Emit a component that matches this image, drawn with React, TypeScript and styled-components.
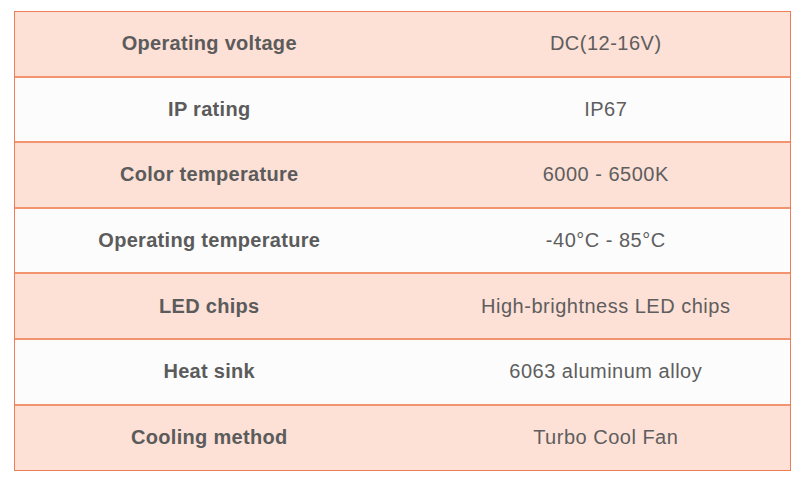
import styled, { createGlobalStyle } from 'styled-components'

const GlobalStyle = createGlobalStyle`
  * {
    margin: 0;
    padding: 0;
    box-sizing: border-box;
  }
  body {
    background: #ffffff;
    font-family: "Liberation Sans", Arial, sans-serif;
  }
`

const Page = styled.div`
  padding: 11px 0 0 14px;
`

const Table = styled.div`
  width: 777px;
  border: 1.5px solid #ef7d55;
  display: flex;
  flex-direction: column;
`

const Row = styled.div<{ $shaded: boolean; $last: boolean }>`
  height: ${({ $last }) => ($last ? 64.5 : 65.6)}px;
  display: grid;
  grid-template-columns: 1fr 1fr;
  align-items: center;
  background: ${({ $shaded }) => ($shaded ? '#fde0d6' : '#fcfcfc')};
  border-bottom: ${({ $last }) => ($last ? 'none' : '2px solid #f4936f')};
`

const Label = styled.div`
  text-align: center;
  font-size: 20px;
  font-weight: 700;
  letter-spacing: 0.3px;
  color: #5b5b5b;
  padding-left: 1px;
`

const Value = styled.div`
  text-align: center;
  font-size: 20px;
  font-weight: 400;
  letter-spacing: 0.5px;
  color: #5e5e5e;
  padding-left: 19px;
`

const specs = [
  ['Operating voltage', 'DC(12-16V)'],
  ['IP rating', 'IP67'],
  ['Color temperature', '6000 - 6500K'],
  ['Operating temperature', '-40°C - 85°C'],
  ['LED chips', 'High-brightness LED chips'],
  ['Heat sink', '6063 aluminum alloy'],
  ['Cooling method', 'Turbo Cool Fan'],
]

export default function App() {
  return (
    <>
      <GlobalStyle />
      <Page>
        <Table>
          {specs.map(([label, value], i) => (
            <Row key={label} $shaded={i % 2 === 0} $last={i === specs.length - 1}>
              <Label>{label}</Label>
              <Value>{value}</Value>
            </Row>
          ))}
        </Table>
      </Page>
    </>
  )
}
